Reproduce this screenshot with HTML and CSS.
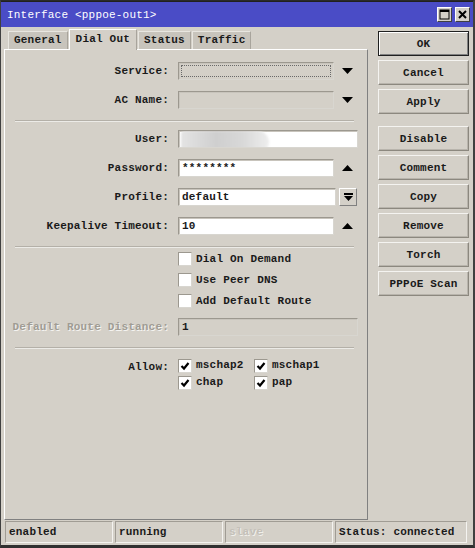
FILE: index.html
```html
<html>
  <head>
    <meta charset="utf-8" />
    <title>Interface &lt;pppoe-out1&gt;</title>
    <link rel="stylesheet" href="styles.css">
  </head>
  <body>
    <div class="window">
      <div class="titlebar">
        <span class="title">Interface &lt;pppoe-out1&gt;</span>
        <span class="title_buttons">
          <span class="title_btn">
            <svg width="11" height="11" viewBox="0 0 11 11"><rect x="1" y="1" width="9" height="9" fill="none" stroke="#000" stroke-width="1"/><rect x="1" y="1" width="9" height="2" fill="#000"/></svg>
          </span>
          <span class="title_btn">
            <svg width="11" height="11" viewBox="0 0 11 11"><path d="M2 2 L9 9 M9 2 L2 9" stroke="#000" stroke-width="2"/></svg>
          </span>
        </span>
      </div>

      <div class="main">
        <div class="left_column">
          <div class="tabs">
            <span class="tab">General</span>
            <span class="tab active">Dial Out</span>
            <span class="tab">Status</span>
            <span class="tab">Traffic</span>
          </div>

          <div class="panel">
            <div class="form_row">
              <span class="label">Service:</span>
              <span class="field">
                <span class="input combo focused"><span class="focus_ring"></span></span>
                <span class="arrow"><svg width="11" height="6" viewBox="0 0 11 6"><path d="M0 0 H11 L5.5 6 Z" fill="#000"/></svg></span>
              </span>
            </div>
            <div class="form_row">
              <span class="label">AC Name:</span>
              <span class="field">
                <span class="input combo"></span>
                <span class="arrow"><svg width="11" height="6" viewBox="0 0 11 6"><path d="M0 0 H11 L5.5 6 Z" fill="#000"/></svg></span>
              </span>
            </div>

            <div class="separator first"></div>

            <div class="form_row">
              <span class="label">User:</span>
              <span class="field">
                <span class="input wide"><span class="smudge"></span></span>
              </span>
            </div>
            <div class="form_row">
              <span class="label">Password:</span>
              <span class="field">
                <span class="input">********</span>
                <span class="arrow"><svg width="11" height="6" viewBox="0 0 11 6"><path d="M0 6 H11 L5.5 0 Z" fill="#000"/></svg></span>
              </span>
            </div>
            <div class="form_row">
              <span class="label">Profile:</span>
              <span class="field">
                <span class="input">default</span>
                <span class="small_button"><svg width="9" height="9" viewBox="0 0 9 9"><rect x="0" y="0" width="9" height="2" fill="#000"/><path d="M0 3 H9 L4.5 8 Z" fill="#000"/></svg></span>
              </span>
            </div>
            <div class="form_row">
              <span class="label">Keepalive Timeout:</span>
              <span class="field">
                <span class="input">10</span>
                <span class="arrow"><svg width="11" height="6" viewBox="0 0 11 6"><path d="M0 6 H11 L5.5 0 Z" fill="#000"/></svg></span>
              </span>
            </div>

            <div class="separator second"></div>

            <div class="check_list">
              <label class="check_row"><span class="checkbox"></span>Dial On Demand</label>
              <label class="check_row"><span class="checkbox"></span>Use Peer DNS</label>
              <label class="check_row"><span class="checkbox"></span>Add Default Route</label>
            </div>

            <div class="form_row disabled">
              <span class="label">Default Route Distance:</span>
              <span class="field">
                <span class="input wide grey">1</span>
              </span>
            </div>

            <div class="separator third"></div>

            <div class="allow_row">
              <span class="label">Allow:</span>
              <div class="allow_grid">
                <label class="check_row small"><span class="checkbox checked"><svg width="10" height="10" viewBox="0 0 10 10"><path d="M1.5 5 L4 7.5 L8.5 2" fill="none" stroke="#000" stroke-width="2.2"/></svg></span>mschap2</label>
                <label class="check_row small"><span class="checkbox checked"><svg width="10" height="10" viewBox="0 0 10 10"><path d="M1.5 5 L4 7.5 L8.5 2" fill="none" stroke="#000" stroke-width="2.2"/></svg></span>mschap1</label>
                <label class="check_row small"><span class="checkbox checked"><svg width="10" height="10" viewBox="0 0 10 10"><path d="M1.5 5 L4 7.5 L8.5 2" fill="none" stroke="#000" stroke-width="2.2"/></svg></span>chap</label>
                <label class="check_row small"><span class="checkbox checked"><svg width="10" height="10" viewBox="0 0 10 10"><path d="M1.5 5 L4 7.5 L8.5 2" fill="none" stroke="#000" stroke-width="2.2"/></svg></span>pap</label>
              </div>
            </div>
          </div>
        </div>

        <div class="buttons">
          <button class="default_button">OK</button>
          <button>Cancel</button>
          <button>Apply</button>
          <button class="group_start">Disable</button>
          <button>Comment</button>
          <button>Copy</button>
          <button>Remove</button>
          <button>Torch</button>
          <button>PPPoE Scan</button>
        </div>
      </div>

      <div class="statusbar">
        <span class="status_cell">enabled</span>
        <span class="status_cell">running</span>
        <span class="status_cell faded">slave</span>
        <span class="status_cell last">Status: connected</span>
      </div>
    </div>
  </body>
</html>
```

FILE: styles.css
```css
body {
  margin: 0;
  background: #d4d0c8;
  font-family: "Liberation Mono", "DejaVu Sans Mono", monospace;
  font-size: 11px;
  font-weight: bold;
  color: #1a1a1a;
}
.window {
  width: 475px;
  height: 548px;
  box-sizing: border-box;
  border: 1px solid #404040;
  border-top-color: #2a2a2a;
  border-right: 2px solid #404040;
  border-bottom: 3px solid #303030;
  display: flex;
  flex-direction: column;
  background: #d4d0c8;
}
.titlebar {
  height: 25px;
  background: #4a4cc6;
  display: flex;
  align-items: center;
  justify-content: space-between;
  padding: 0 3px 0 6px;
  border-top: 1px solid #202020;
}
.title {
  color: #fff;
  font-size: 11px;
  font-weight: normal;
  letter-spacing: 0.2px;
}
.title_buttons {
  display: flex;
  gap: 3px;
}
.title_btn {
  width: 15px;
  height: 15px;
  box-sizing: border-box;
  background: #d4d0c8;
  border: 1px solid;
  border-color: #fff #404040 #404040 #fff;
  display: flex;
  align-items: center;
  justify-content: center;
}

.main {
  flex: 1;
  display: flex;
  flex-direction: row;
}
.left_column {
  width: 364px;
  margin-left: 3px;
  display: flex;
  flex-direction: column;
}
.tabs {
  display: flex;
  align-items: flex-end;
  height: 22px;
  padding-left: 4px;
}
.tab {
  height: 18px;
  box-sizing: border-box;
  padding: 2px 5px 0 5px;
  background: #c8c4bc;
  border: 1px solid #e8e6e0;
  border-bottom: none;
  border-right: 1px solid #a8a49c;
  margin-right: 1px;
  letter-spacing: 0.2px;
}
.tab.active {
  height: 21px;
  background: #d4d0c8;
  border-color: #fff #a8a49c transparent #fff;
  padding: 3px 6px 0 6px;
  margin-bottom: -1px;
  position: relative;
}
.panel {
  flex: 1;
  box-sizing: border-box;
  border: 1px solid;
  border-color: #fff #808080 #808080 #fff;
  padding: 12px 9px 0 6px;
}

.form_row {
  display: flex;
  align-items: center;
  height: 18px;
  margin-bottom: 11px;
}
.label {
  width: 158px;
  margin-right: 9px;
  text-align: right;
  letter-spacing: 0.2px;
  white-space: nowrap;
}
.field {
  display: flex;
  align-items: center;
  width: 180px;
  height: 18px;
}
.input {
  width: 158px;
  height: 18px;
  box-sizing: border-box;
  background: #fff;
  border: 1px solid;
  border-color: #9c988f #d8d6d0 #d8d6d0 #9c988f;
  box-shadow: inset 1px 1px 0 #c8c4bc;
  padding: 2px 3px 0 3px;
  letter-spacing: 0.2px;
  position: relative;
  overflow: hidden;
}
.input.wide {
  width: 180px;
}
.input.combo,
.input.grey {
  background: #d4d0c8;
}
.focused {
  padding: 2px;
}
.focus_ring {
  display: block;
  height: 10px;
  border: 1px dotted #6a6a6a;
}
.smudge {
  position: absolute;
  left: 2px;
  top: 0;
  width: 88px;
  height: 22px;
  background: linear-gradient(90deg, #e4e4e4 0%, #cfcfcf 40%, #d8d8d8 70%, #eeeeee 100%);
  border-radius: 4px 14px 14px 4px;
  filter: blur(1px);
}
.arrow {
  width: 22px;
  display: flex;
  justify-content: center;
  padding-left: 2px;
}
.small_button {
  width: 18px;
  height: 18px;
  box-sizing: border-box;
  margin-left: 3px;
  border: 1px solid;
  border-color: #fff #808080 #808080 #fff;
  display: flex;
  align-items: center;
  justify-content: center;
}

.separator {
  height: 0;
  border-top: 1px solid #b4b0a8;
  border-bottom: 1px solid #ecebe7;
  margin: 0 4px 8px 4px;
}
.separator.second {
  margin-bottom: 5px;
}
.separator.third {
  margin-bottom: 10px;
}

.check_list {
  padding-left: 167px;
  margin-bottom: 2px;
}
.check_row {
  display: flex;
  align-items: center;
  height: 21px;
  letter-spacing: 0.2px;
}
.checkbox {
  width: 14px;
  height: 14px;
  box-sizing: border-box;
  background: #fff;
  border: 1px solid;
  border-color: #9c988f #d8d6d0 #d8d6d0 #9c988f;
  margin-right: 4px;
  display: flex;
  align-items: center;
  justify-content: center;
}
.check_list .check_row {
  align-items: flex-start;
}
.check_list .check_row .checkbox {
  margin-top: -1px;
}

.disabled .label {
  color: #a09c94;
  text-shadow: 1px 1px 0 #f4f3f0;
}

.allow_row {
  display: flex;
  align-items: flex-start;
}
.allow_row .label {
  padding-top: 2px;
}
.allow_grid {
  display: grid;
  grid-template-columns: 76px 90px;
  grid-auto-rows: 17px;
}
.check_row.small {
  height: 17px;
  align-items: flex-start;
}

.buttons {
  display: flex;
  flex-direction: column;
  margin-left: 10px;
  padding-top: 4px;
  gap: 4px;
}
button {
  width: 91px;
  height: 25px;
  box-sizing: border-box;
  background: #d4d0c8;
  border: 1px solid;
  border-color: #f4f3f0 #8c887f #8c887f #f4f3f0;
  box-shadow: inset -1px -1px 0 #b8b4ac;
  font-family: "Liberation Mono", "DejaVu Sans Mono", monospace;
  font-size: 11px;
  font-weight: bold;
  letter-spacing: 0.2px;
  color: #1a1a1a;
  padding: 0;
}
.default_button {
  border: 1px solid #202020;
  box-shadow: inset 1px 1px 0 #fff, inset -1px -1px 0 #808080;
}
.group_start {
  margin-top: 8px;
}

.statusbar {
  height: 25px;
  display: flex;
  gap: 2px;
  padding: 1px 3px 0 4px;
  box-sizing: border-box;
}
.status_cell {
  width: 108px;
  height: 22px;
  box-sizing: border-box;
  border: 1px solid;
  border-color: #a09c94 #f4f3f0 #f4f3f0 #a09c94;
  padding: 4px 0 0 3px;
  letter-spacing: 0.2px;
}
.status_cell.faded {
  color: #c4c0b8;
  text-shadow: 1px 1px 0 #f0efeb;
}
.status_cell.last {
  width: 132px;
}
```
